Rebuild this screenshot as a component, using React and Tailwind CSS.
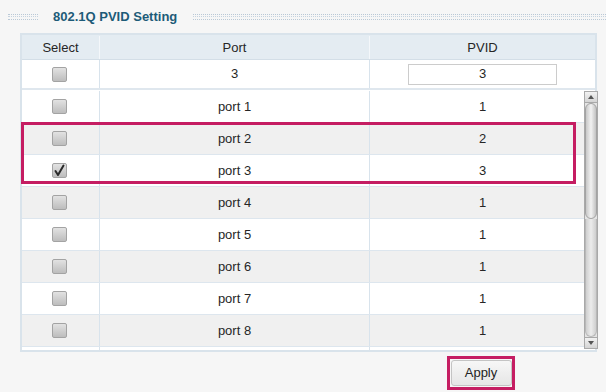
import React from "react";

const rows = [
  { port: "port 1", pvid: "1", checked: false },
  { port: "port 2", pvid: "2", checked: false },
  { port: "port 3", pvid: "3", checked: true },
  { port: "port 4", pvid: "1", checked: false },
  { port: "port 5", pvid: "1", checked: false },
  { port: "port 6", pvid: "1", checked: false },
  { port: "port 7", pvid: "1", checked: false },
  { port: "port 8", pvid: "1", checked: false },
  { port: "", pvid: "", checked: false, partial: true },
];

function Checkbox({ checked }) {
  return (
    <div className="w-[15px] h-[15px] rounded-[2px] border border-[#a3a3a3] bg-gradient-to-b from-[#e2e2e2] to-[#bdbdbd] flex items-center justify-center">
      {checked && (
        <svg width="13" height="13" viewBox="0 0 13 13">
          <path d="M2.5 7 L5 11 L10.5 1.5" fill="none" stroke="#2a2a2a" strokeWidth="2" strokeLinecap="round" strokeLinejoin="round" />
        </svg>
      )}
    </div>
  );
}

function Dots({ className }) {
  return (
    <div className={"flex flex-col justify-between h-[6px] " + className}>
      <div className="border-t border-dotted border-[#b9c8d6]" />
      <div className="border-t border-dotted border-[#c6d3df]" />
      <div className="border-t border-dotted border-[#b9c8d6]" />
    </div>
  );
}

export default function App() {
  return (
    <div className="w-[606px] h-[392px] bg-[#f6f6f6] font-['Liberation_Sans',Arial,sans-serif] text-[13px] text-[#262626] overflow-hidden">
      {/* Title */}
      <div className="h-[33px] flex items-center pl-[8px]">
        <Dots className="w-[30px]" />
        <div className="ml-[15px] font-bold text-[13px] text-[#1d5b78]">802.1Q PVID Setting</div>
        <Dots className="ml-[16px] flex-1" />
      </div>

      {/* Table */}
      <div className="relative ml-[20px] w-[577px] h-[319px] border-2 border-[#d9e3eb] bg-white flex flex-col">
        {/* Header */}
        <div className="h-[25px] flex bg-[#e4ecf2] border-b border-[#d3dee7] pt-[1px]">
          <div className="w-[78px] flex items-center justify-center border-r border-[#f4f7fa]">Select</div>
          <div className="w-[270px] flex items-center justify-center border-r border-[#f4f7fa]">Port</div>
          <div className="flex-1 flex items-center justify-center">PVID</div>
        </div>
        {/* Input row */}
        <div className="h-[30px] flex bg-white border-b-2 border-[#dfe7ee]">
          <div className="w-[78px] flex items-center justify-center pr-[3px] border-r border-[#d8e3ec]">
            <Checkbox />
          </div>
          <div className="w-[270px] flex items-center justify-center border-r border-[#d8e3ec]">3</div>
          <div className="flex-1 flex items-center justify-center">
            <div className="w-[149px] h-[21px] border border-[#cccccc] bg-white flex items-center justify-center">3</div>
          </div>
        </div>
        {/* Scroll area */}
        <div className="flex-1 overflow-hidden pt-[1px]">
          {rows.map((r, i) => (
            <div
              key={i}
              className={
                "h-[32px] flex border-b border-[#dde6ee] " +
                (i % 2 === 1 ? "bg-[#f0f0f0]" : "bg-white")
              }
            >
              <div className="w-[78px] flex items-center justify-center pr-[3px] border-r border-[#d8e3ec]">
                {!r.partial && <Checkbox checked={r.checked} />}
              </div>
              <div className="w-[270px] flex items-center justify-center border-r border-[#d8e3ec]">{r.port}</div>
              <div className="flex-1 flex items-center justify-center">{r.pvid}</div>
            </div>
          ))}
        </div>

        {/* Scrollbar */}
        <div className="absolute left-[562px] top-[56px] w-[14px] h-[258px] border border-[#a9a9a9] bg-[#e4e4e4] flex flex-col">
          <div className="h-[11px] bg-gradient-to-b from-[#f2f2f2] to-[#d4d4d4] border-b border-[#a9a9a9] flex items-center justify-center">
            <div className="w-0 h-0 border-l-[3px] border-r-[3px] border-b-[4px] border-l-transparent border-r-transparent border-b-[#555]" />
          </div>
          <div className="h-[116px] rounded-[6px] border border-[#a3a3a3] bg-gradient-to-r from-[#c8c8c8] via-[#f2f2f2] to-[#c2c2c2]" />
          <div className="flex-1 bg-gradient-to-r from-[#cfcfcf] via-[#ececec] to-[#cfcfcf] rounded-b-[6px] border-x border-b border-[#b8b8b8]" />
          <div className="h-[11px] bg-gradient-to-b from-[#f2f2f2] to-[#d4d4d4] border-t border-[#a9a9a9] flex items-center justify-center">
            <div className="w-0 h-0 border-l-[3px] border-r-[3px] border-t-[4px] border-l-transparent border-r-transparent border-t-[#555]" />
          </div>
        </div>

        {/* Highlight overlay */}
        <div className="absolute left-[-1px] top-[87px] w-[555px] h-[62px] border-[3px] border-[#c51d62] pointer-events-none" />
      </div>

      {/* Apply */}
      <div className="mt-[4px] ml-[447px] w-[68px] h-[34px] border-[3px] border-[#c51d62] flex items-center justify-center">
        <button className="w-[61px] h-[26px] rounded-[3px] border border-[#c4c4c4] bg-gradient-to-b from-[#f7f7f7] to-[#e6e6e6] text-[13px] text-[#222] font-['Liberation_Sans',Arial,sans-serif]">
          Apply
        </button>
      </div>
    </div>
  );
}
